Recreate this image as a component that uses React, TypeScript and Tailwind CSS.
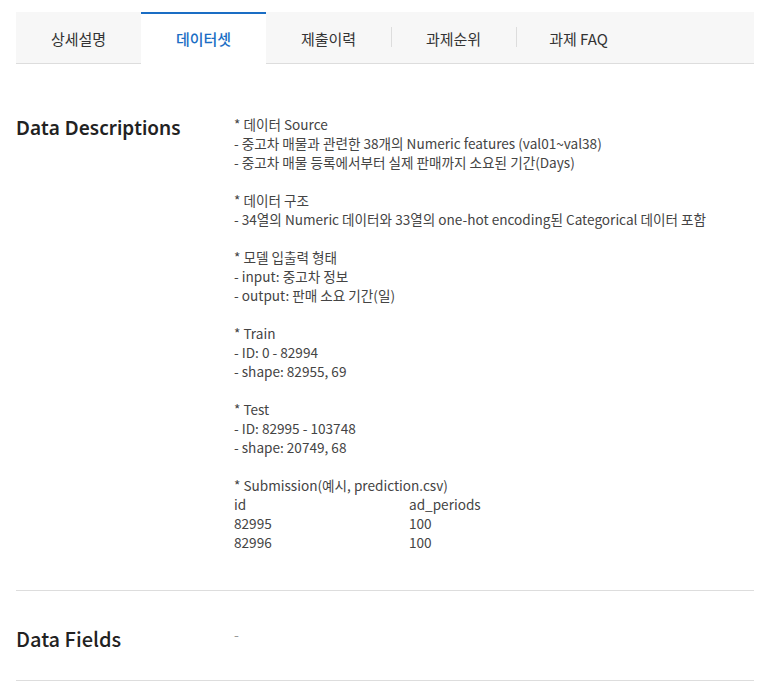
import React, { useState } from 'react';

const tabs = ['상세설명', '데이터셋', '제출이력', '과제순위', '과제 FAQ'];

const descLines: string[] = [
    '* 데이터 Source',
    '- 중고차 매물과 관련한 38개의 Numeric features (val01~val38)',
    '- 중고차 매물 등록에서부터 실제 판매까지 소요된 기간(Days)',
    '',
    '* 데이터 구조',
    '- 34열의 Numeric 데이터와 33열의 one-hot encoding된 Categorical 데이터 포함',
    '',
    '* 모델 입출력 형태',
    '- input: 중고차 정보',
    '- output: 판매 소요 기간(일)',
    '',
    '* Train',
    '- ID: 0 - 82994',
    '- shape: 82955, 69',
    '',
    '* Test',
    '- ID: 82995 - 103748',
    '- shape: 20749, 68',
    '',
    '* Submission(예시, prediction.csv)',
];

const submission = [
    ['id', 'ad_periods'],
    ['82995', '100'],
    ['82996', '100'],
];

const cjk = { fontFamily: '"Noto Sans CJK KR", "Noto Sans", sans-serif' };

export default function App() {
    const [activeTab, setActiveTab] = useState(1);

    return (
        <div className="bg-white min-h-[693px] pt-3 pl-4 pr-[14px]" style={cjk}>
            {/* 탭 */}
            <div className="flex h-[52px] bg-[#f7f7f7] border-b border-[#dddddd]">
                {tabs.map((tab, i) => {
                    const active = i === activeTab;
                    const showSep = i >= 3;
                    return (
                        <button
                            key={tab}
                            onClick={() => setActiveTab(i)}
                            className={`relative w-[125px] flex items-center justify-center text-[15px] -mb-px ${
                                active
                                    ? 'bg-white border-t-2 border-[#1a6dc4] text-[#1a6dc4] font-medium'
                                    : 'text-[#333333] border-t-2 border-transparent'
                            }`}
                        >
                            {showSep && <span className="absolute left-0 top-[13px] h-[20px] w-px bg-[#dddddd]" />}
                            {tab}
                        </button>
                    );
                })}
            </div>

            {/* Data Descriptions */}
            <div className="flex pt-[51px] pb-[38px] border-b border-[#dddddd]">
                <h2
                    className="w-[218px] text-[19px] leading-[28px] -mt-px font-semibold text-[#222222]"
                    style={{ fontFamily: '"Noto Sans", sans-serif' }}
                >
                    Data Descriptions
                </h2>
                <div className="text-[13.6px] leading-[19px] text-[#444444]">
                    {descLines.map((line, i) => (
                        <div key={i} className="h-[19px]">{line}</div>
                    ))}
                    {submission.map((row, i) => (
                        <div key={i} className="flex h-[19px]">
                            <span className="w-[175px]">{row[0]}</span>
                            <span>{row[1]}</span>
                        </div>
                    ))}
                </div>
            </div>

            {/* Data Fields */}
            <div className="flex pt-[34px] pb-[27px] border-b border-[#dddddd]">
                <h2 className="w-[218px] text-[20px] leading-[28px] font-medium text-[#222222]">Data Fields</h2>
                <div className="text-[14px] leading-[19px] text-[#999999]">-</div>
            </div>
        </div>
    );
}
